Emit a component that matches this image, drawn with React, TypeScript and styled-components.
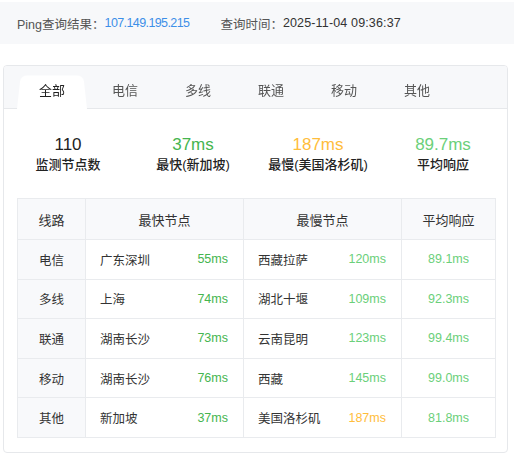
import React from "react";
import styled, { createGlobalStyle } from "styled-components";

const Global = createGlobalStyle`
  html, body { margin: 0; padding: 0; background: #ffffff; }
  body { font-family: "Liberation Sans", "Noto Sans CJK SC", Arial, sans-serif; color: #333; }
  * { box-sizing: border-box; }
`;

const Page = styled.div`
  width: 514px;
  padding-top: 2px;
`;

const InfoBar = styled.div`
  height: 42px;
  background: #f7f8fa;
  display: flex;
  align-items: center;
  padding-left: 17px;
  font-size: 12.5px;
  color: #555;
  gap: 31px;
`;

const InfoItem = styled.div`
  display: flex;
  align-items: center;
`;

const InfoValue = styled.span<{ $blue?: boolean }>`
  color: ${(p) => (p.$blue ? "#3d8fe8" : "#333")};
  letter-spacing: ${(p) => (p.$blue ? "-0.6px" : "0.15px")};
`;

const Card = styled.div`
  margin: 21px 6px 0 3px;
  border: 1px solid #e6e8eb;
  border-radius: 4px;
  overflow: hidden;
  padding-bottom: 14px;
`;

const TabBar = styled.div`
  height: 43px;
  background: #f7f8fa;
  border-bottom: 1px solid #e6e8eb;
  display: flex;
  align-items: flex-end;
  padding-left: 11.5px;
`;

const Tab = styled.div<{ $active?: boolean }>`
  position: relative;
  width: 73px;
  height: 38px;
  display: flex;
  align-items: center;
  justify-content: center;
  font-size: 13px;
  color: ${(p) => (p.$active ? "#222" : "#555")};
  margin-bottom: -1px;
  padding-bottom: 1px;
  &::before {
    content: "";
    display: ${(p) => (p.$active ? "block" : "none")};
    position: absolute;
    left: 1.5px;
    right: 1.5px;
    top: 0;
    bottom: 0;
    background: #fff;
    border-radius: 7px 7px 0 0;
    transform: perspective(50px) rotateX(9deg);
    transform-origin: bottom;
  }
`;

const TabLabel = styled.span`
  position: relative;
`;

const Body = styled.div`
  padding: 25px 13px 0 13px;
`;

const Stats = styled.div`
  display: grid;
  grid-template-columns: repeat(4, 1fr);
  margin: 0 -11.5px;
`;

const Stat = styled.div`
  display: flex;
  flex-direction: column;
  align-items: center;
`;

const StatValue = styled.div<{ $color: string }>`
  font-size: 17px;
  line-height: 22px;
  color: ${(p) => p.$color};
`;

const StatLabel = styled.div`
  font-size: 13px;
  line-height: 18px;
  color: #222;
  font-weight: 500;
`;

const Table = styled.div`
  margin-top: 24px;
  display: grid;
  grid-template-columns: 68px 158px 158px 94px;
  grid-template-rows: 41px;
  grid-auto-rows: 39.6px;
  border-top: 1px solid #e9ebee;
  border-left: 1px solid #e9ebee;
  width: 479px;
`;

const HeadCell = styled.div`
  background: #f8f9fb;
  border-right: 1px solid #e9ebee;
  border-bottom: 1px solid #e9ebee;
  display: flex;
  align-items: center;
  justify-content: center;
  font-size: 13px;
  color: #333;
`;

const LineCell = styled(HeadCell)`
  font-size: 12.5px;
  color: #333;
`;

const NodeCell = styled.div`
  border-right: 1px solid #e9ebee;
  border-bottom: 1px solid #e9ebee;
  display: flex;
  align-items: center;
  justify-content: space-between;
  padding: 0 15px 0 14px;
  font-size: 12.5px;
  color: #333;
`;

const AvgCell = styled.div<{ $color: string }>`
  border-right: 1px solid #e9ebee;
  border-bottom: 1px solid #e9ebee;
  display: flex;
  align-items: center;
  justify-content: center;
  font-size: 12.5px;
  color: ${(p) => p.$color};
`;

const Ms = styled.span<{ $color: string }>`
  color: ${(p) => p.$color};
`;

const GREEN = "#45b54f";
const LIGHT = "#6bd07a";
const ORANGE = "#ffbd3b";

const tabs = ["全部", "电信", "多线", "联通", "移动", "其他"];

const rows = [
  { line: "电信", fast: "广东深圳", fastMs: "55ms", slow: "西藏拉萨", slowMs: "120ms", slowColor: LIGHT, avg: "89.1ms" },
  { line: "多线", fast: "上海", fastMs: "74ms", slow: "湖北十堰", slowMs: "109ms", slowColor: LIGHT, avg: "92.3ms" },
  { line: "联通", fast: "湖南长沙", fastMs: "73ms", slow: "云南昆明", slowMs: "123ms", slowColor: LIGHT, avg: "99.4ms" },
  { line: "移动", fast: "湖南长沙", fastMs: "76ms", slow: "西藏", slowMs: "145ms", slowColor: LIGHT, avg: "99.0ms" },
  { line: "其他", fast: "新加坡", fastMs: "37ms", slow: "美国洛杉矶", slowMs: "187ms", slowColor: ORANGE, avg: "81.8ms" },
];

export default function App() {
  return (
    <>
      <Global />
      <Page>
        <InfoBar>
          <InfoItem>
            Ping查询结果：<InfoValue $blue>107.149.195.215</InfoValue>
          </InfoItem>
          <InfoItem>
            查询时间：<InfoValue>2025-11-04 09:36:37</InfoValue>
          </InfoItem>
        </InfoBar>
        <Card>
          <TabBar>
            {tabs.map((t, i) => (
              <Tab key={t} $active={i === 0}>
                <TabLabel>{t}</TabLabel>
              </Tab>
            ))}
          </TabBar>
          <Body>
            <Stats>
              <Stat>
                <StatValue $color="#222">110</StatValue>
                <StatLabel>监测节点数</StatLabel>
              </Stat>
              <Stat>
                <StatValue $color={GREEN}>37ms</StatValue>
                <StatLabel>最快(新加坡)</StatLabel>
              </Stat>
              <Stat>
                <StatValue $color={ORANGE}>187ms</StatValue>
                <StatLabel>最慢(美国洛杉矶)</StatLabel>
              </Stat>
              <Stat>
                <StatValue $color={LIGHT}>89.7ms</StatValue>
                <StatLabel>平均响应</StatLabel>
              </Stat>
            </Stats>
            <Table>
              <HeadCell>线路</HeadCell>
              <HeadCell>最快节点</HeadCell>
              <HeadCell>最慢节点</HeadCell>
              <HeadCell>平均响应</HeadCell>
              {rows.map((r) => (
                <React.Fragment key={r.line}>
                  <LineCell>{r.line}</LineCell>
                  <NodeCell>
                    <span>{r.fast}</span>
                    <Ms $color={GREEN}>{r.fastMs}</Ms>
                  </NodeCell>
                  <NodeCell>
                    <span>{r.slow}</span>
                    <Ms $color={r.slowColor}>{r.slowMs}</Ms>
                  </NodeCell>
                  <AvgCell $color={LIGHT}>{r.avg}</AvgCell>
                </React.Fragment>
              ))}
            </Table>
          </Body>
        </Card>
      </Page>
    </>
  );
}
